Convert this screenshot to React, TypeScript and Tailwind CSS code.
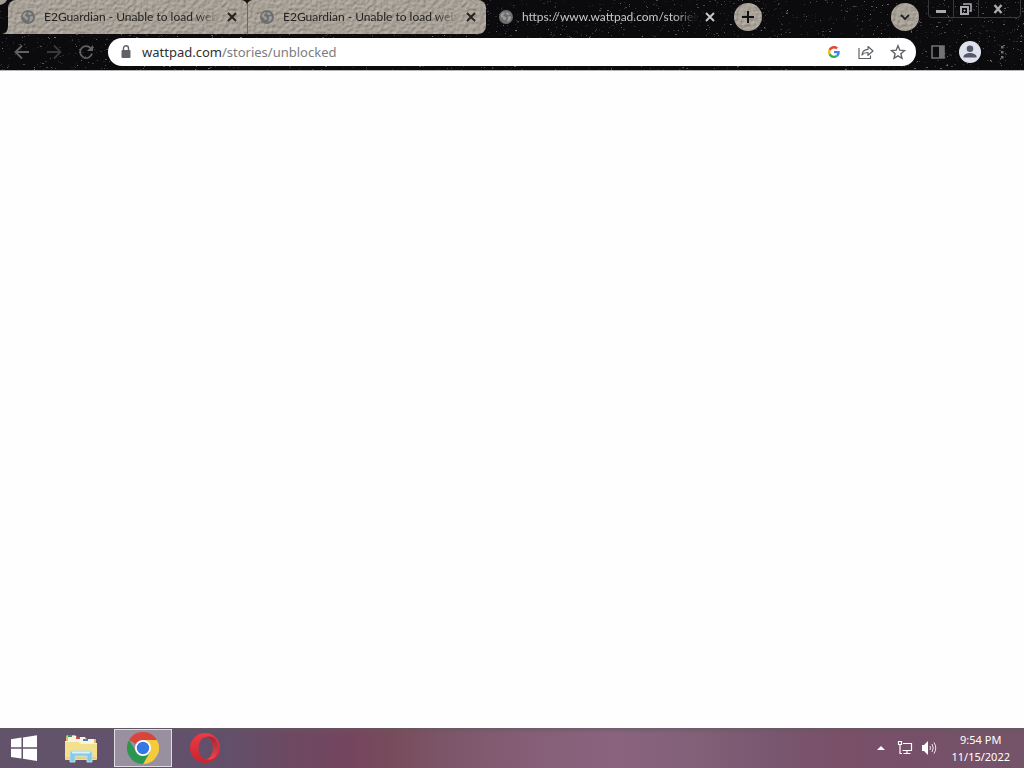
import React from "react";

function random(seed: number) {
  let s = seed;
  return () => {
    s = (s * 1664525 + 1013904223) % 4294967296;
    return s / 4294967296;
  };
}

const rnd = random(42);
const stars = Array.from({ length: 2400 }, () => ({
  x: Math.floor(rnd() * 1024),
  y: Math.floor(rnd() * 70),
  o: 0.08 + rnd() * rnd() * 0.5,
  w: rnd() > 0.75 ? 2 : 1,
}));

function Stars() {
  return (
    <svg className="pointer-events-none absolute inset-0 h-full w-full" viewBox="0 0 1024 70" preserveAspectRatio="none" aria-hidden="true">
      {stars.map((s, i) => (
        <rect key={i} x={s.x} y={s.y} width={s.w} height="1" fill="#d8d4d8" opacity={s.o} />
      ))}
      <path d="M0 0h7q-2 4-7 5z" fill="#a49c90" />
      <path d="M8 26v8H2q6-1 6-8z" fill="#a49c90" />
    </svg>
  );
}

function Stone() {
  return (
    <svg className="pointer-events-none absolute inset-0 h-full w-full" aria-hidden="true">
      <filter id="stone" x="0" y="0" width="100%" height="100%" colorInterpolationFilters="sRGB">
        <feTurbulence type="fractalNoise" baseFrequency="0.26 0.3" numOctaves="2" seed="7" result="n" />
        <feDiffuseLighting in="n" surfaceScale="0.8" lightingColor="#beb6ab">
          <feDistantLight azimuth="235" elevation="62" />
        </feDiffuseLighting>
      </filter>
      <rect width="100%" height="100%" filter="url(#stone)" />
    </svg>
  );
}

function Globe() {
  return (
    <svg viewBox="0 0 16 16" className="h-4 w-4 shrink-0" aria-hidden="true">
      <circle cx="8" cy="8" r="7" fill="#6d6e70" />
      <path d="M2.600 7 3 5.200 5 3.500l1.800-.3-.3 1.600-1.400 1 .3 1.500 2 .5.800 1.700-1 1.600-1.800-.6-1-2-1.600-.4zM8.500 3.200l2 .6 1.500 1.400-1.800.8-1.700-.6-.8-1.200zM9.500 8l2-1 1.700.8-.2 1.800-1.500 2.200-2 1.200-.2-2 .8-1.400z" fill="#aaa69f" opacity=".8" />
    </svg>
  );
}

function Cross() {
  return (
    <svg viewBox="0 0 10 10" className="h-[10px] w-[10px]" fill="none" stroke="currentColor" strokeWidth="1.9" aria-hidden="true">
      <path d="m1 1 8 8M9 1 1 9" />
    </svg>
  );
}

function Tab({ title, active = false, first = false }: { title: string; active?: boolean; first?: boolean }) {
  return (
    <div
      className={
        active
          ? "relative flex h-[34px] w-[240px] min-w-0 items-center pr-2 pl-3 text-[#c9c8cc]"
          : first
            ? "relative flex h-[34px] w-[240px] min-w-0 items-center overflow-hidden rounded-tl-lg border-r border-[#6f695f] pr-[7px] pl-3 text-[#24221f]"
            : "relative flex h-[34px] w-[238px] min-w-0 items-center overflow-hidden rounded-r-lg pr-[7px] pl-[11px] text-[#24221f]"
      }
    >
      {!active && <Stone />}
      <button type="button" role="tab" aria-selected={active} className="relative flex min-w-0 flex-1 items-center gap-2 text-left">
        <Globe />
        <span className="min-w-0 flex-1 overflow-hidden mask-r-from-86% mask-r-to-100% font-['Lato','Noto_Sans',sans-serif] text-[12px] leading-4 whitespace-nowrap">{title}</span>
      </button>
      <button type="button" aria-label="Close tab" className="relative ml-1 flex h-4 w-4 items-center justify-center">
        <Cross />
      </button>
    </div>
  );
}

function TabStrip() {
  return (
    <div className="relative flex h-[38px] items-start pl-2">
      <div role="tablist" className="relative flex min-w-0">
        <Tab first title="E2Guardian - Unable to load web" />
        <Tab title="E2Guardian - Unable to load web" />
        <Tab active title="https://www.wattpad.com/stories" />
        <svg viewBox="0 0 12 4" className="pointer-events-none absolute top-0 left-[233px] h-1 w-3" aria-hidden="true">
          <path d="M0 0h12Q8 0 6 4 4 0 0 0z" fill="#19130f" />
        </svg>
      </div>
      <button type="button" aria-label="New tab" className="relative mt-[3px] ml-2 flex h-7 w-7 shrink-0 items-center justify-center overflow-hidden rounded-full">
        <Stone />
        <svg viewBox="0 0 14 14" className="relative h-[14px] w-[14px]" stroke="#111" strokeWidth="2" aria-hidden="true">
          <path d="M7 1v12M1 7h12" />
        </svg>
      </button>
      <div className="flex-1" />
      <button type="button" aria-label="Search tabs" className="relative mt-[3px] mr-[9px] flex h-7 w-7 shrink-0 items-center justify-center overflow-hidden rounded-full">
        <Stone />
        <svg viewBox="0 0 10 8" className="relative h-2 w-[10px]" fill="none" stroke="#222" strokeWidth="1.8" aria-hidden="true">
          <path d="m1 2 4 4 4-4" />
        </svg>
      </button>
      <div className="mr-[3px] flex h-[18px] shrink-0 rounded-b border border-t-0 border-[#39383d] text-[#aaa9ad]">
        <button type="button" aria-label="Minimize" className="flex w-[25px] items-center justify-center border-r border-[#39383d]">
          <svg viewBox="0 0 10 10" className="h-[10px] w-[10px]" aria-hidden="true">
            <path d="M0 6h10v3H0z" fill="currentColor" />
          </svg>
        </button>
        <button type="button" aria-label="Restore" className="flex w-[25px] items-center justify-center border-r border-[#39383d]">
          <svg viewBox="0 0 12 12" className="h-3 w-3" fill="none" stroke="currentColor" aria-hidden="true">
            <path d="M4 2V1h7v7h-1.500" strokeWidth="1.600" />
            <path d="M1 4h7v7H1z" strokeWidth="2" />
            <path d="M4 7h1v1H4z" strokeWidth="1" />
          </svg>
        </button>
        <button type="button" aria-label="Close" className="flex w-[41px] items-center justify-center pr-1">
          <svg viewBox="0 0 10 10" className="h-[10px] w-[10px]" stroke="currentColor" strokeWidth="2.4" aria-hidden="true">
            <path d="m1.500 1 7 8M8.500 1l-7 8" />
          </svg>
        </button>
      </div>
    </div>
  );
}

function Toolbar() {
  return (
    <div className="relative flex h-8 items-start pr-[14px] pl-[14px] text-[#4c4b4e]">
      <div className="mr-[14px] flex h-7 items-center gap-4">
        <button type="button" aria-label="Back" className="text-[#626164]">
          <svg viewBox="0 0 16 16" className="h-4 w-4" fill="none" stroke="currentColor" strokeWidth="1.8" aria-hidden="true">
            <path d="M15 8H2M8 1.500 1.500 8 8 14.500" />
          </svg>
        </button>
        <button type="button" aria-label="Forward" className="text-[#39383b]">
          <svg viewBox="0 0 16 16" className="h-4 w-4" fill="none" stroke="currentColor" strokeWidth="1.8" aria-hidden="true">
            <path d="M1 8h13M8 1.500 14.500 8 8 14.500" />
          </svg>
        </button>
        <button type="button" aria-label="Reload" className="text-[#626164]">
          <svg viewBox="0 0 16 16" className="h-4 w-4" aria-hidden="true">
            <path d="M12.600 4A6 6 0 1 0 14 9.500" fill="none" stroke="currentColor" strokeWidth="1.8" />
            <path d="M15 1v6H9z" fill="currentColor" />
          </svg>
        </button>
      </div>
      <div className="flex h-7 min-w-0 flex-1 items-center rounded-full bg-white pr-[10px] pl-3 text-[#5f6368]">
        <svg viewBox="0 0 12 16" className="h-4 w-3 shrink-0" aria-hidden="true">
          <rect x="1.500" y="6" width="9" height="8" rx="1" fill="currentColor" />
          <path d="M3.500 6V4.200a2.500 2.500 0 0 1 5 0V6" fill="none" stroke="currentColor" strokeWidth="1.4" />
        </svg>
        <a href="https://www.wattpad.com/stories/unblocked" className="ml-[10px] min-w-0 flex-1 truncate text-[13px] leading-5 text-[#7b7d80]">
          <span className="text-[#2e3033]">wattpad.com</span>/stories/unblocked
        </a>
        <div className="flex items-center gap-4">
          <button type="button" aria-label="Search with Google">
            <svg viewBox="0 0 48 48" className="h-4 w-4 p-[2px]" aria-hidden="true">
              <path fill="#EA4335" d="M24 9.500c3.500 0 6.700 1.200 9.200 3.600l6.900-6.900C35.900 2.400 30.500 0 24 0 14.600 0 6.500 5.400 2.600 13.200l8 6.200C12.400 13.700 17.700 9.500 24 9.500z" />
              <path fill="#4285F4" d="M47 24.600c0-1.600-.2-3.100-.4-4.600H24v9h12.900c-.6 3-2.200 5.500-4.800 7.200l7.700 6C44.400 38 47 31.900 47 24.600z" />
              <path fill="#FBBC05" d="M10.500 28.600a14.500 14.500 0 0 1 0-9.200l-8-6.200a24 24 0 0 0 0 21.600z" />
              <path fill="#34A853" d="M24 48c6.500 0 11.900-2.100 15.900-5.800l-7.700-6c-2.200 1.500-4.900 2.300-8.200 2.300-6.300 0-11.600-4.200-13.500-9.900l-8 6.200C6.500 42.600 14.600 48 24 48z" />
            </svg>
          </button>
          <button type="button" aria-label="Share">
            <svg viewBox="0 0 16 16" className="h-4 w-4" fill="none" stroke="currentColor" strokeWidth="1.2" strokeLinejoin="round" aria-hidden="true">
              <path d="M1 4v10.500h11.500v-3M4 11c.3-4 2.500-5.500 6-5.700V2.500L15 7l-5 4.300V8.500C7.500 8.400 5.500 9 4 11z" />
            </svg>
          </button>
          <button type="button" aria-label="Bookmark this page">
            <svg viewBox="0 0 16 16" className="h-4 w-4" fill="none" stroke="currentColor" strokeWidth="1.4" aria-hidden="true">
              <path d="m8 1.800 1.800 4.400 4.700.4-3.600 3.100 1.100 4.600L8 11.800l-4 2.500 1.100-4.600-3.600-3.100 4.700-.4z" />
            </svg>
          </button>
        </div>
      </div>
      <button type="button" aria-label="Side panel" className="ml-[14px] flex h-7 w-4 items-center justify-center text-[#727175]">
        <svg viewBox="0 0 16 16" className="h-4 w-4" aria-hidden="true">
          <path d="M2 2h12v12H2z" fill="none" stroke="currentColor" strokeWidth="1.600" />
          <path d="M9 2h5v12H9z" fill="currentColor" />
        </svg>
      </button>
      <button type="button" aria-label="Profile" className="mt-[3px] ml-[13px] h-[22px] w-[22px] rounded-full bg-[#dfe3ee]">
        <svg viewBox="0 0 22 22" className="h-[22px] w-[22px]" fill="#53596a" aria-hidden="true">
          <circle cx="11" cy="7.800" r="3.300" />
          <path d="M4.500 16.500v-1c0-2.300 4-3.500 6.500-3.500s6.500 1.200 6.500 3.500v1z" />
        </svg>
      </button>
      <button type="button" aria-label="Menu" className="ml-[13px] flex h-7 w-4 items-center justify-center text-[#727175]">
        <svg viewBox="0 0 16 16" className="h-4 w-4" fill="currentColor" aria-hidden="true">
          <path d="M7 2h2.500v2.500H7zM7 7h2.500v2.500H7zM7 12h2.500v2.500H7z" />
        </svg>
      </button>
    </div>
  );
}

function Taskbar() {
  return (
    <footer className="flex h-10 items-center bg-[linear-gradient(180deg,#5f5a5c88_0px,transparent_6px),linear-gradient(90deg,#62536a_0%,#62506b_22%,#6c4962_28%,#75455f_34%,#774b5a_38%,#7d5568_43%,#845d75_50%,#8a647f_60%,#826078_68%,#79566f_76%,#7a4f68_82%,#765068_90%,#74546a_100%)] text-white">
      <button type="button" aria-label="Start" className="ml-[10px] flex h-10 w-7 items-center justify-center">
        <svg viewBox="0 0 28 28" className="h-7 w-7" fill="#fff" aria-hidden="true">
          <path d="M1 5.200 11.500 3.600v9.700H1zM13 3.400 27 1.200v12.100H13zM1 14.700h10.500v9.800L1 22.900zM13 14.700h14v12.200l-14-2.200z" />
        </svg>
      </button>
      <button type="button" aria-label="File Explorer" className="ml-[26px] flex h-10 w-[34px] items-center justify-center">
        <svg viewBox="0 0 34 32" className="h-8 w-[34px]" aria-hidden="true">
          <path d="M2 5q0-2 2-2h7l2 2h8l2 2h9v21H2z" fill="#d8bd72" />
          <path d="M4 4h8v6H4zM12 5h9v6h-9zM20 7h10v5H20z" fill="#f8f5e6" />
          <path d="M4 3h4v2H4z" fill="#3a9d4d" />
          <path d="M12 5h4v2h-4z" fill="#d6473c" />
          <path d="M19 7h5v2h-5z" fill="#3e83cc" />
          <path d="M1 9h13l3 2h16v16q0 1-1 1H2q-1 0-1-1z" fill="#f3e08f" />
          <path d="M1 9.500h13l3 2h16" fill="none" stroke="#fff3bd" />
          <path d="M2 26h30" stroke="#dcc06b" />
          <path d="M6 30V21q0-2 2-2h18q2 0 2 2v9h-5v-6H11v6z" fill="#86c8e6" stroke="#b5e0ef" />
          <path d="M8 20.500h18" stroke="#d6f2fa" strokeWidth="2" />
        </svg>
      </button>
      <button type="button" aria-label="Google Chrome" className="ml-4 flex h-[38px] w-[58px] items-center justify-center border border-[#dedbe2] bg-[#98909f]">
        <svg viewBox="0 0 32 32" className="h-8 w-8" aria-hidden="true">
          <path d="M16 16 2.140 8A16 16 0 0 1 29.860 8H16z" fill="#d8453a" />
          <path d="M16 8h13.860A16 16 0 0 1 16 32l6.930-12z" fill="#f5cb3b" />
          <path d="M2.140 8A16 16 0 0 0 16 32l6.930-12L16 16l-6.930 4z" fill="#2b9650" />
          <circle cx="16" cy="16" r="8" fill="#fff" />
          <circle cx="16" cy="16" r="6.200" fill="#3478e6" />
        </svg>
      </button>
      <button type="button" aria-label="Opera" className="ml-[17px] flex h-10 w-8 items-center justify-center">
        <svg viewBox="0 0 32 32" className="h-8 w-8" aria-hidden="true">
          <defs>
            <linearGradient id="opera-ring" x1="0" y1="0" x2="0" y2="1"><stop stopColor="#ee3a44" /><stop offset="1" stopColor="#c8252f" /></linearGradient>
            <linearGradient id="opera-side" x1="0" y1="0" x2="0" y2="1"><stop stopColor="#a32431" /><stop offset="1" stopColor="#e84a4d" /></linearGradient>
          </defs>
          <path fillRule="evenodd" d="M16 1a15 15 0 1 0 0 30 15 15 0 1 0 0-30zm1 4c4.200 0 7 5 7 11s-2.800 11-7 11-7.500-5-7.500-11S12.800 5 17 5z" fill="url(#opera-ring)" />
          <path d="M17 5c3-1 6-.4 9 1.800a15 15 0 0 1 0 18.400c-3 2.200-6 2.800-9 1.800 4.200 0 7-5 7-11S21.200 5 17 5z" fill="url(#opera-side)" />
        </svg>
      </button>
      <div className="flex-1" />
      <button type="button" aria-label="Show hidden icons" className="mr-3 flex h-10 w-2 items-center">
        <svg viewBox="0 0 8 4" className="h-1 w-2" fill="#fff" aria-hidden="true"><path d="m0 4 4-4 4 4z" /></svg>
      </button>
      <button type="button" aria-label="Network" className="mr-2">
        <svg viewBox="0 0 16 16" className="h-4 w-4" fill="none" stroke="#fff" aria-hidden="true">
          <path d="M6 3.500h8.500v7H5.500M10 11v2.500M6.500 13.500h7M1.500 1.500h3v3h-3zM3 5v8.500h2" strokeWidth="1.200" />
        </svg>
      </button>
      <button type="button" aria-label="Volume" className="mr-[14px]">
        <svg viewBox="0 0 16 16" className="h-4 w-4" aria-hidden="true">
          <path d="M1 5h2l4-4v14l-4-4H1z" fill="#fff" />
          <path d="M9 6q1 2 0 4M11 4q2.500 4 0 8M13 2.500q3.500 5.500 0 11" fill="none" stroke="#fff" opacity=".85" />
        </svg>
      </button>
      <div className="mr-[14px] text-center text-[11px] leading-[17px]">
        <div>9:54 PM</div>
        <div>11/15/2022</div>
      </div>
    </footer>
  );
}

export default function App() {
  return (
    <div className="flex min-h-screen flex-col bg-white font-['Noto_Sans','Open_Sans',sans-serif]">
      <header className="relative border-b border-[#b5b5b7] bg-[#0b0a0d]">
        <Stars />
        <TabStrip />
        <Toolbar />
      </header>
      <main className="flex-1 bg-[#fefefe]" />
      <Taskbar />
    </div>
  );
}
